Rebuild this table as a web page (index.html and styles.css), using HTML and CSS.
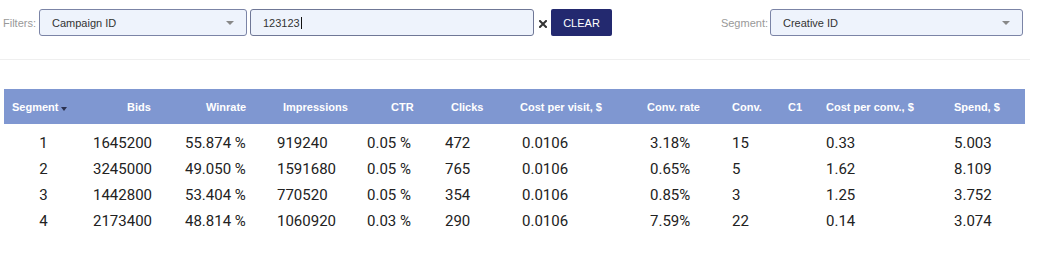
FILE: index.html
```html
<!DOCTYPE html>
<html>
<head>
<meta charset="utf-8">
<link rel="stylesheet" href="styles.css">
</head>
<body>
<div class="toolbar">
  <div class="filters">
    <span class="label">Filters:</span>
    <div class="select select-campaign"><span>Campaign ID</span><span class="arrow"></span></div>
    <div class="input"><span>123123</span><span class="cursor"></span></div>
    <svg class="clear-x" width="8" height="8" viewBox="0 0 8 8"><path d="M1 1 L7 7 M7 1 L1 7" stroke="#333" stroke-width="2" stroke-linecap="square"/></svg>
    <button class="btn-clear">CLEAR</button>
  </div>
  <div class="segment">
    <span class="label">Segment:</span>
    <div class="select select-segment"><span>Creative ID</span><span class="arrow"></span></div>
  </div>
</div>
<div class="divider"></div>
<div class="table">
  <div class="row head">
    <div class="th c0">Segment<span class="sort"></span></div>
    <div class="th c1">Bids</div>
    <div class="th c2">Winrate</div>
    <div class="th c3">Impressions</div>
    <div class="th c4">CTR</div>
    <div class="th c5">Clicks</div>
    <div class="th c6">Cost per visit, $</div>
    <div class="th c7">Conv. rate</div>
    <div class="th c8">Conv.</div>
    <div class="th c9">C1</div>
    <div class="th c10">Cost per conv., $</div>
    <div class="th c11">Spend, $</div>
  </div>
  <div class="body">
    <div class="row">
      <div class="td seg">1</div><div class="td">1645200</div><div class="td">55.874 %</div><div class="td">919240</div><div class="td">0.05 %</div><div class="td">472</div><div class="td">0.0106</div><div class="td">3.18%</div><div class="td">15</div><div class="td"></div><div class="td">0.33</div><div class="td">5.003</div>
    </div>
    <div class="row">
      <div class="td seg">2</div><div class="td">3245000</div><div class="td">49.050 %</div><div class="td">1591680</div><div class="td">0.05 %</div><div class="td">765</div><div class="td">0.0106</div><div class="td">0.65%</div><div class="td">5</div><div class="td"></div><div class="td">1.62</div><div class="td">8.109</div>
    </div>
    <div class="row">
      <div class="td seg">3</div><div class="td">1442800</div><div class="td">53.404 %</div><div class="td">770520</div><div class="td">0.05 %</div><div class="td">354</div><div class="td">0.0106</div><div class="td">0.85%</div><div class="td">3</div><div class="td"></div><div class="td">1.25</div><div class="td">3.752</div>
    </div>
    <div class="row">
      <div class="td seg">4</div><div class="td">2173400</div><div class="td">48.814 %</div><div class="td">1060920</div><div class="td">0.03 %</div><div class="td">290</div><div class="td">0.0106</div><div class="td">7.59%</div><div class="td">22</div><div class="td"></div><div class="td">0.14</div><div class="td">3.074</div>
    </div>
  </div>
</div>
</body>
</html>
```
FILE: styles.css
```css
* { box-sizing: border-box; }
html, body { margin: 0; padding: 0; background: #fff; }
body { font-family: "Liberation Sans", Arial, sans-serif; font-size: 11px; color: #333; }

.toolbar {
  display: flex;
  justify-content: space-between;
  align-items: center;
  padding: 9px 25px 0 3px;
}
.filters, .segment { display: flex; align-items: center; }
.label { color: #999; font-size: 11px; }
.filters .label { margin-right: 3px; }
.segment .label { margin-right: 2px; }

.select, .input {
  height: 27px;
  border: 1px solid #7b84a6;
  border-radius: 3px;
  background: #eef3fc;
  display: flex;
  align-items: center;
  padding-left: 12px;
  color: #333;
  font-size: 11px;
}
.select { justify-content: space-between; padding-right: 12px; }
.select-campaign { width: 208px; }
.select-segment { width: 253px; }
.arrow {
  width: 0; height: 0;
  border-left: 4px solid transparent;
  border-right: 4px solid transparent;
  border-top: 4px solid #888;
}
.input { width: 284px; margin-left: 3px; border-color: #6f7796; }
.cursor { display: inline-block; width: 1px; height: 12px; background: #111; margin-left: 1px; }
.clear-x { margin-left: 5px; margin-top: 3px; }
.btn-clear {
  margin-left: 4px;
  width: 61px;
  height: 27px;
  border: none;
  border-radius: 2px;
  background: #23296f;
  color: #fff;
  font-family: "Liberation Sans", Arial, sans-serif;
  font-size: 11px;
  padding: 0;
}

.divider { margin-top: 23px; width: 1030px; height: 1px; background: #efefef; }

.table { margin: 29px 0 0 4px; width: 1021px; }
.row {
  display: grid;
  grid-template-columns: 79px 92px 92px 90px 78px 77px 128px 82px 58px 36px 128px 81px;
}
.head {
  height: 35px;
  background: #7f97d1;
  color: #fff;
  font-weight: bold;
  font-size: 11px;
  align-items: center;
}
.th { display: flex; align-items: center; white-space: nowrap; }
.c0 { padding-left: 8px; }
.c1 { padding-left: 44px; }
.c2 { padding-left: 31px; }
.c3 { padding-left: 16px; }
.c4 { padding-left: 34px; }
.c5 { padding-left: 16px; }
.c6 { padding-left: 8px; }
.c7 { padding-left: 7px; }
.c8 { padding-left: 10px; }
.c9 { padding-left: 8px; }
.c10 { padding-left: 10px; }
.c11 { padding-left: 10px; }
.sort {
  width: 0; height: 0;
  margin-left: 3px; margin-top: 4px;
  border-left: 3px solid transparent;
  border-right: 3px solid transparent;
  border-top: 4px solid #2b3150;
}

.body { padding-top: 6px; font-family: Roboto, "Liberation Sans", sans-serif; font-size: 15px; color: #222; }
.body .row { height: 26px; align-items: center; }
.td { padding-left: 10px; white-space: nowrap; }
.td.seg { padding-left: 0; text-align: center; }
```
